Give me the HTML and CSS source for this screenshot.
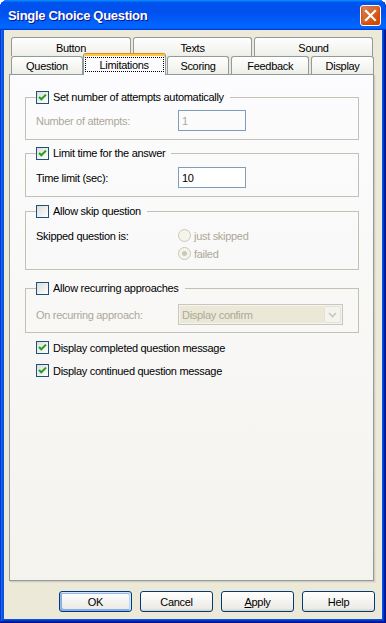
FILE: index.html
```html
<!DOCTYPE html>
<html lang="en">
<head>
    <meta charset="UTF-8">
    <meta name="viewport" content="width=device-width, initial-scale=1.0">
    <title>Single Choice Question</title>
    <link rel="stylesheet" href="styles.css">
</head>
<body>
    <div class="window">
        <!-- Barra de título -->
        <div class="titlebar">
            <span class="title">Single Choice Question</span>
            <span class="close">
                <svg width="13" height="13" viewBox="0 0 13 13"><path d="M2 2 L11 11 M11 2 L2 11" stroke="#fff" stroke-width="2.2" stroke-linecap="square"/></svg>
            </span>
        </div>

        <div class="client">
            <!-- Abas -->
            <div class="tabs">
                <div class="tab-row back">
                    <div class="tab t-button">Button</div>
                    <div class="tab t-texts">Texts</div>
                    <div class="tab t-sound">Sound</div>
                </div>
                <div class="tab-row front">
                    <div class="tab t-question">Question</div>
                    <div class="tab t-limit selected"><span class="focus">Limitations</span></div>
                    <div class="tab t-scoring">Scoring</div>
                    <div class="tab t-feedback">Feedback</div>
                    <div class="tab t-display">Display</div>
                </div>
            </div>

            <!-- Conteúdo da aba Limitations -->
            <div class="panel">
                <fieldset class="group g1">
                    <legend><span class="cb checked"><svg width="11" height="11" viewBox="0 0 11 11"><path d="M2 5 L4.3 7.3 L9 2.6" fill="none" stroke="#21a121" stroke-width="2"/></svg></span>Set number of attempts automatically</legend>
                    <div class="row">
                        <span class="lbl disabled">Number of attempts:</span>
                        <input type="text" class="field" value="1" disabled>
                    </div>
                </fieldset>

                <fieldset class="group g2">
                    <legend><span class="cb checked"><svg width="11" height="11" viewBox="0 0 11 11"><path d="M2 5 L4.3 7.3 L9 2.6" fill="none" stroke="#21a121" stroke-width="2"/></svg></span>Limit time for the answer</legend>
                    <div class="row">
                        <span class="lbl">Time limit (sec):</span>
                        <input type="text" class="field" value="10">
                    </div>
                </fieldset>

                <fieldset class="group g3">
                    <legend><span class="cb"></span>Allow skip question</legend>
                    <div class="radios">
                        <div class="radio-row">
                            <span class="lbl">Skipped question is:</span>
                            <span class="radio"></span><span class="disabled">just skipped</span>
                        </div>
                        <div class="radio-row">
                            <span class="lbl"></span>
                            <span class="radio on"></span><span class="disabled">failed</span>
                        </div>
                    </div>
                </fieldset>

                <fieldset class="group g4">
                    <legend><span class="cb"></span>Allow recurring approaches</legend>
                    <div class="row">
                        <span class="lbl disabled">On recurring approach:</span>
                        <div class="select">
                            <span class="select-text">Display confirm</span>
                            <span class="select-btn">
                                <svg width="9" height="6" viewBox="0 0 9 6"><path d="M1 1 L4.5 4.5 L8 1" fill="none" stroke="#c9c7ba" stroke-width="1.6"/></svg>
                            </span>
                        </div>
                    </div>
                </fieldset>

                <div class="check-line c5"><span class="cb checked"><svg width="11" height="11" viewBox="0 0 11 11"><path d="M2 5 L4.3 7.3 L9 2.6" fill="none" stroke="#21a121" stroke-width="2"/></svg></span>Display completed question message</div>
                <div class="check-line c6"><span class="cb checked"><svg width="11" height="11" viewBox="0 0 11 11"><path d="M2 5 L4.3 7.3 L9 2.6" fill="none" stroke="#21a121" stroke-width="2"/></svg></span>Display continued question message</div>
            </div>

            <!-- Botões -->
            <div class="buttons">
                <button class="btn default">OK</button>
                <button class="btn">Cancel</button>
                <button class="btn"><u>A</u>pply</button>
                <button class="btn">Help</button>
            </div>
        </div>
    </div>
</body>
</html>
```

FILE: styles.css
```css
/* Página */
body {
    margin: 0;
    background: #fff;
    font-family: "Liberation Sans", Arial, sans-serif;
    font-size: 11px;
    letter-spacing: -0.3px;
    color: #000;
}

/* Janela estilo XP */
.window {
    width: 386px;
    height: 623px;
    box-sizing: border-box;
    display: flex;
    flex-direction: column;
    padding: 0 4px 4px;
    background: #0855dd;
    border-radius: 8px 8px 0 0;
    box-shadow: inset -1px -1px #00138c, inset 1px 1px #0831d9, inset -2px -2px #001ea0,
                inset 2px 2px #166aee, inset -3px -3px #003bda, inset 3px 3px #0855dd;
}

/* Barra de título */
.titlebar {
    height: 30px;
    margin: 0 -4px;
    display: flex;
    align-items: center;
    justify-content: space-between;
    padding: 0 5px 0 8px;
    border-radius: 8px 8px 0 0;
    background: linear-gradient(180deg, #0997ff, #0053ee 8%, #0050ee 40%, #0066ff 88%, #0066ff 93%, #005bff 95%, #003dd7 96%, #003dd7);
}

.title {
    color: #fff;
    font-weight: bold;
    font-size: 13px;
    letter-spacing: -0.3px;
    text-shadow: 1px 1px #0f1089;
    padding-top: 1px;
}

.close {
    width: 21px;
    height: 21px;
    box-sizing: border-box;
    border: 1px solid #fff;
    border-radius: 3px;
    display: flex;
    align-items: center;
    justify-content: center;
    background: radial-gradient(circle at 90% 90%, #cc4600 0%, #dc6527 55%, #cd7546 70%, #e88a67 100%);
    box-shadow: inset 0 -1px 2px 1px #da4600;
}

/* Área interna */
.client {
    flex: 1;
    display: flex;
    flex-direction: column;
    background: #ece9d8;
    padding: 7px 8px 0 5px;
}

/* Abas */
.tabs {
    padding-left: 2px;
}

.tab-row {
    display: flex;
    align-items: flex-end;
}

.back {
    height: 19px;
}

.front {
    height: 18px;
}

.tab {
    box-sizing: border-box;
    height: 100%;
    display: flex;
    align-items: center;
    justify-content: center;
    border: 1px solid #919b9c;
    border-bottom: none;
    border-radius: 3px 3px 0 0;
    background: linear-gradient(180deg, #fff, #fafaf9 26%, #f0f0ea 95%, #ecebe6);
}

.back .tab {
    padding-top: 1px;
}

.t-button { width: 120px; }
.t-texts { width: 119px; margin-left: 2px; }
.t-sound { width: 119px; margin-left: 2px; }

.t-question { width: 72px; }
.t-limit { width: 83px; }
.t-scoring { width: 63px; margin-left: 1px; }
.t-feedback { width: 78px; margin-left: 2px; }
.t-display { width: 63px; margin-left: 2px; }

.front .tab {
    padding-top: 1px;
}

/* Aba selecionada sobrepõe a borda do painel */
.tab.selected {
    position: relative;
    z-index: 1;
    height: 22px;
    margin-bottom: -1px;
    padding: 3px 1px 3px;
    background: #fcfcfe;
    border-top-color: #e68b2c;
    box-shadow: inset 0 2px #ffc73c;
}

.focus {
    flex: 1;
    align-self: stretch;
    display: flex;
    align-items: center;
    justify-content: center;
    outline: 1px dotted #000;
    outline-offset: -1px;
}

/* Painel */
.panel {
    flex: 1;
    border: 1px solid #919b9c;
    background: linear-gradient(180deg, #fcfcfe, #f4f3ee);
    padding: 16px 14px 0 15px;
    box-shadow: 1px 1px #d0cebf, 2px 2px #e3e0d0;
}

/* Grupos */
.group {
    margin: 0;
    padding: 0 10px 8px;
    border: 1px solid #c3c1b4;
    min-width: 0;
}

.group legend {
    padding: 0 6px 0 0;
    height: 13px;
    line-height: 13px;
    display: flex;
    align-items: center;
}

.g1 .row { margin-top: 6px; }
.g2 { margin-top: 7px; }
.g2 .row { margin-top: 7px; }
.g3 { margin-top: 8px; padding-bottom: 9px; }
.g4 { margin-top: 12px; padding-bottom: 7px; }
.g4 .row { margin-top: 9px; }

.row {
    display: flex;
    align-items: center;
    height: 21px;
}

.lbl {
    width: 142px;
    flex: none;
}

.disabled {
    color: #aca899;
}

/* Caixa de texto */
.field {
    box-sizing: border-box;
    width: 68px;
    height: 21px;
    margin: 0;
    padding: 0 0 0 3px;
    border: 1px solid #7f9db9;
    background: #fff;
    font-family: inherit;
    font-size: 11px;
    letter-spacing: -0.3px;
    color: #000;
}

.field:disabled {
    background: transparent;
    color: #aca899;
}

/* Caixa de seleção (checkbox) */
.cb {
    width: 13px;
    height: 13px;
    box-sizing: border-box;
    flex: none;
    margin-right: 4px;
    border: 1px solid #1c5180;
    background: linear-gradient(135deg, #dcdcd7, #fff);
    display: inline-flex;
    align-items: center;
    justify-content: center;
}

/* Botões de opção */
.radios {
    margin-top: 11px;
}

.radio-row {
    display: flex;
    align-items: center;
    height: 13px;
}

.radio-row + .radio-row {
    margin-top: 5px;
}

.radio {
    width: 13px;
    height: 13px;
    box-sizing: border-box;
    border: 1px solid #cac8bb;
    border-radius: 50%;
    background: #f5f4ea;
    margin-right: 3px;
    display: flex;
    align-items: center;
    justify-content: center;
}

.radio.on::after {
    content: "";
    width: 5px;
    height: 5px;
    border-radius: 50%;
    background: #cac8bb;
}

/* Lista de seleção desativada */
.select {
    box-sizing: border-box;
    width: 165px;
    height: 21px;
    border: 1px solid #c9c7ba;
    background: #f4f3ee;
    display: flex;
    padding: 1px;
}

.select-text {
    flex: 1;
    background: #ebe8d7;
    color: #aca899;
    padding-left: 2px;
    display: flex;
    align-items: center;
}

.select-btn {
    width: 17px;
    box-sizing: border-box;
    border: 1px solid #e4e2d7;
    border-radius: 2px;
    background: #f4f3ee;
    display: flex;
    align-items: center;
    justify-content: center;
}

/* Linhas de checkbox soltas */
.check-line {
    display: flex;
    align-items: center;
    height: 13px;
    padding-left: 11px;
}

.c5 { margin-top: 8px; }
.c6 { margin-top: 10px; }

/* Botões do rodapé */
.buttons {
    display: flex;
    justify-content: flex-end;
    gap: 8px;
    margin: 10px -1px 7px 0;
}

.btn {
    width: 73px;
    height: 21px;
    box-sizing: border-box;
    border: 1px solid #003c74;
    border-radius: 3px;
    background: linear-gradient(180deg, #fff, #ecebe6 86%, #d6d0c5);
    font-family: inherit;
    font-size: 11px;
    letter-spacing: -0.3px;
    color: #000;
    padding: 0;
}

.btn.default {
    box-shadow: inset -1px 1px #cee7ff, inset 1px 2px #98b8ea, inset -2px 2px #bcd4f6,
                inset 1px -1px #89ade4, inset 2px -2px #89ade4;
}
```
